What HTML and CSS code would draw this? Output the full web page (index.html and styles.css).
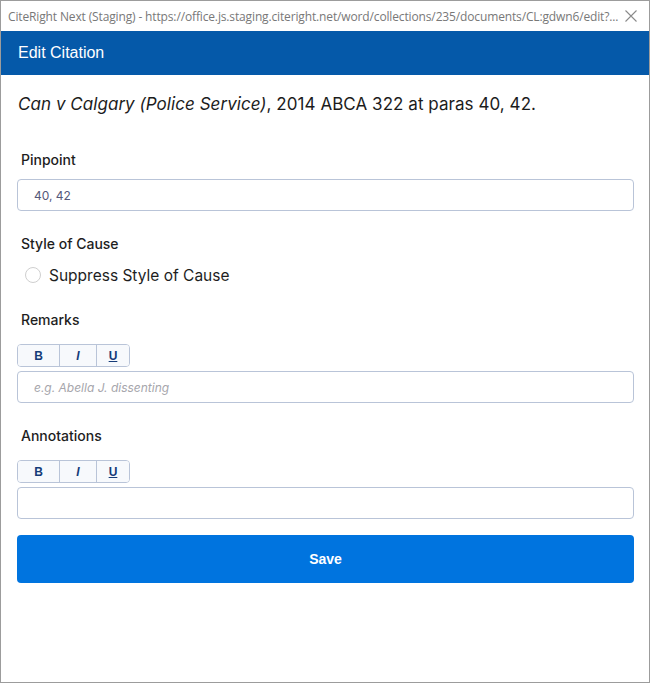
FILE: index.html
```html
<!DOCTYPE html>
<html>
<head>
    <meta charset="UTF-8">
    <title>Edit Citation</title>
    <link rel="stylesheet" href="styles.css">
</head>
<body>
<div class="window">
    <div class="titlebar">
        <span class="titlebar-text">CiteRight Next (Staging) - https://office.js.staging.citeright.net/word/collections/235/documents/CL:gdwn6/edit?...</span>
        <svg class="close-icon" width="12" height="12" viewBox="0 0 12 12">
            <path d="M0.5 0.5 L11.5 11.5 M11.5 0.5 L0.5 11.5" stroke="#8a8a8a" stroke-width="1.1" fill="none"/>
        </svg>
    </div>

    <div class="header">Edit Citation</div>

    <div class="content">
        <p class="citation"><i>Can v Calgary (Police Service)</i>, 2014 ABCA 322 at paras 40, 42.</p>

        <!-- Pinpoint -->
        <div class="field field-pinpoint">
            <label class="field-label" for="pinpoint">Pinpoint</label>
            <input class="text-input" id="pinpoint" type="text" value="40, 42">
        </div>

        <!-- Style of cause -->
        <div class="field field-style">
            <div class="field-label">Style of Cause</div>
            <label class="radio-row">
                <span class="radio"></span>
                <span>Suppress Style of Cause</span>
            </label>
        </div>

        <!-- Remarks -->
        <div class="field field-remarks">
            <div class="field-label">Remarks</div>
            <div class="format-group">
                <button class="format-btn btn-b">B</button>
                <button class="format-btn btn-i">I</button>
                <button class="format-btn btn-u">U</button>
            </div>
            <input class="text-input editor" type="text" placeholder="e.g. Abella J. dissenting">
        </div>

        <!-- Annotations -->
        <div class="field field-annotations">
            <div class="field-label">Annotations</div>
            <div class="format-group">
                <button class="format-btn btn-b">B</button>
                <button class="format-btn btn-i">I</button>
                <button class="format-btn btn-u">U</button>
            </div>
            <input class="text-input editor" type="text">
        </div>

        <button class="save-btn">Save</button>
    </div>
</div>
</body>
</html>
```

FILE: styles.css
```css
html, body {
    margin: 0;
    padding: 0;
}

body {
    background: #ffffff;
    font-family: Inter, "Noto Sans", sans-serif;
}

.window {
    width: 648px;
    height: 681px;
    border: 1px solid #9c9c9c;
    background: #ffffff;
    overflow: hidden;
}

.titlebar {
    height: 30px;
    display: flex;
    align-items: center;
    padding: 0 0 0 7px;
}

.titlebar-text {
    font-family: "Open Sans", "Noto Sans", sans-serif;
    font-size: 12px;
    color: #787878;
    white-space: nowrap;
    letter-spacing: -0.14px;
    width: 612px;
    overflow: hidden;
}

.close-icon {
    margin-left: 5px;
}

.header {
    height: 44px;
    background: #0559a9;
    color: #ffffff;
    font-family: "Liberation Sans", Arial, sans-serif;
    font-size: 16px;
    line-height: 44px;
    padding-left: 17px;
}

.content {
    padding: 0 15px 0 16px;
}

.citation {
    margin: 19px 0 0 1px;
    font-size: 17px;
    line-height: 20px;
    color: #1c1c1c;
    letter-spacing: 0.05px;
}

.field-label {
    display: block;
    font-size: 14px;
    font-weight: 500;
    line-height: 16px;
    color: #1e1e1e;
    padding-left: 4px;
}

.field-pinpoint {
    margin-top: 38px;
}

.field-pinpoint .field-label {
    margin-bottom: 11px;
}

.text-input {
    display: block;
    box-sizing: border-box;
    width: 100%;
    height: 32px;
    border: 1px solid #b9c4d8;
    border-radius: 4px;
    padding: 0 16px;
    font-family: Inter, "Noto Sans", sans-serif;
    font-size: 12px;
    color: #55587a;
    outline: none;
}

.text-input::placeholder {
    color: #a6a6ac;
    font-style: italic;
}

.field-style {
    margin-top: 25px;
}

.radio-row {
    display: flex;
    align-items: center;
    margin-top: 13px;
    height: 20px;
    padding-left: 8px;
    font-size: 15.5px;
    color: #1e1e1e;
}

.radio {
    width: 14px;
    height: 14px;
    border: 1px solid #cfcfcf;
    border-radius: 50%;
    margin-right: 8px;
}

.field-remarks {
    margin-top: 27px;
}

.field-annotations {
    margin-top: 25px;
}

.format-group {
    display: flex;
    margin-top: 16px;
    margin-bottom: 4px;
    width: 113px;
    height: 23px;
    box-sizing: border-box;
    border: 1px solid #b9c4d8;
    border-radius: 4px;
    overflow: hidden;
}

.format-btn {
    border: none;
    background: #f7f9fc;
    font-family: "Liberation Sans", Arial, sans-serif;
    font-size: 12px;
    font-weight: bold;
    color: #153b78;
    padding: 0;
    height: 100%;
}

.btn-b {
    width: 42px;
    border-right: 1px solid #b9c4d8;
}

.btn-i {
    width: 37px;
    font-style: italic;
    border-right: 1px solid #b9c4d8;
}

.btn-u {
    flex: 1;
    text-decoration: underline;
}

.save-btn {
    display: block;
    width: 100%;
    height: 48px;
    margin-top: 16px;
    border: none;
    border-radius: 4px;
    background: #0074df;
    color: #ffffff;
    font-family: "Liberation Sans", Arial, sans-serif;
    font-size: 14px;
    font-weight: bold;
}
```
